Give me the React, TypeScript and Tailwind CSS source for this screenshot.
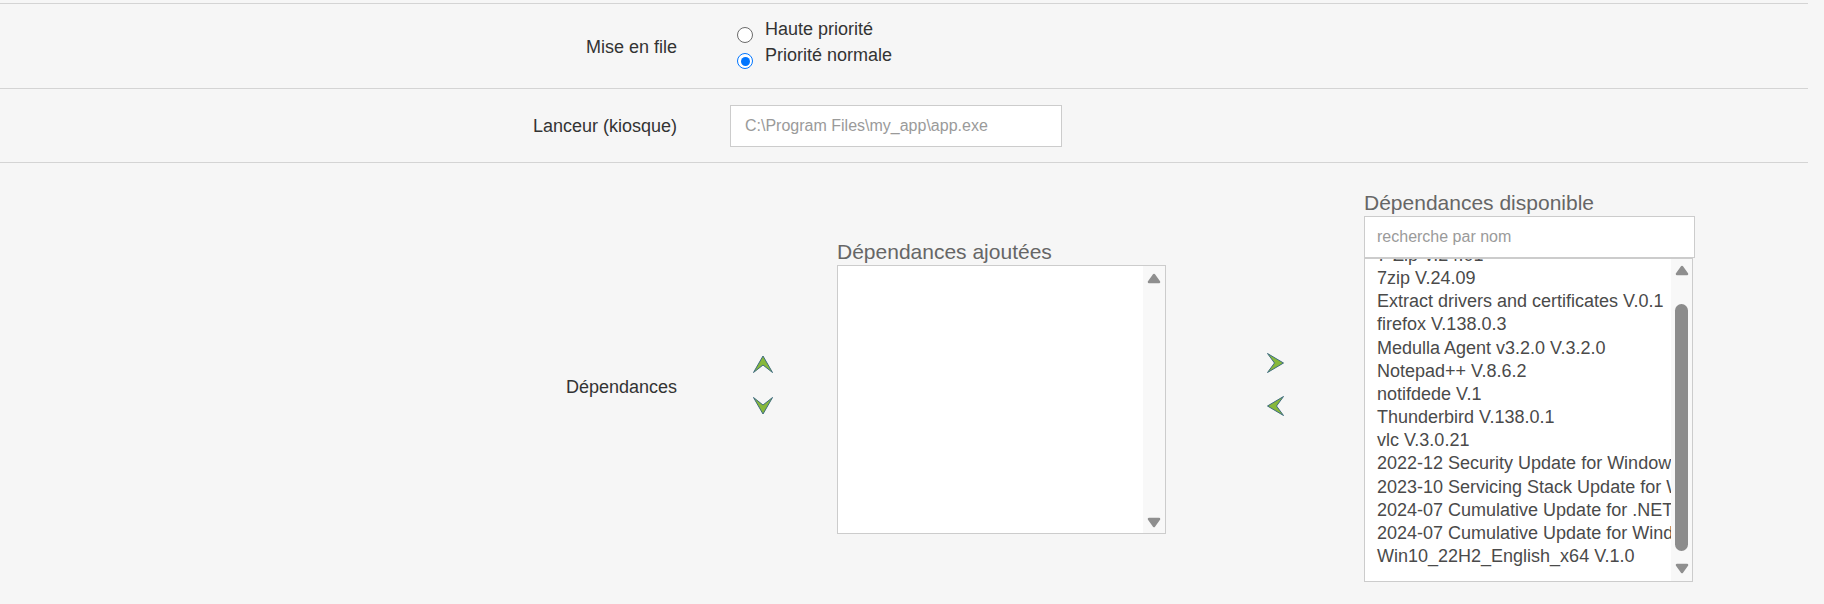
import React from "react";

const items = [
  "7-Zip V.24.01",
  "7zip V.24.09",
  "Extract drivers and certificates V.0.1",
  "firefox V.138.0.3",
  "Medulla Agent v3.2.0 V.3.2.0",
  "Notepad++ V.8.6.2",
  "notifdede V.1",
  "Thunderbird V.138.0.1",
  "vlc V.3.0.21",
  "2022-12 Security Update for Windows 10 Version 22H2",
  "2023-10 Servicing Stack Update for Windows 10 Version 22H2",
  "2024-07 Cumulative Update for .NET Framework 3.5",
  "2024-07 Cumulative Update for Windows 10 Version 22H2",
  "Win10_22H2_English_x64 V.1.0",
];

function Tri({ down }: { down?: boolean }) {
  return (
    <svg width="14" height="11" viewBox="0 0 14 11" className="block">
      <polygon
        points={down ? "2,2 12,2 7,9" : "7,2 12,9 2,9"}
        fill="#8f8f8f"
        stroke="#8f8f8f"
        strokeWidth="2.5"
        strokeLinejoin="round"
      />
    </svg>
  );
}

function Chevron({ dir }: { dir: "up" | "down" | "left" | "right" }) {
  const vertical = dir === "up" || dir === "down";
  const pts =
    dir === "up"
      ? "10,1 19.5,17.5 10,10 0.5,17.5"
      : dir === "down"
      ? "10,17 19.5,0.5 10,8 0.5,0.5"
      : dir === "right"
      ? "0.5,0.5 16.5,10 0.5,19.5 7.5,10"
      : "16.5,0.5 0.5,10 16.5,19.5 9.5,10";
  return (
    <svg
      width={vertical ? 20 : 17}
      height={vertical ? 18 : 20}
      viewBox={vertical ? "0 0 20 18" : "0 0 17 20"}
      className="block"
    >
      <polygon points={pts} fill="#87b83a" stroke="#3e6c7e" strokeWidth="1" strokeLinejoin="miter" />
    </svg>
  );
}

function Radio({ checked }: { checked?: boolean }) {
  return checked ? (
    <span className="mt-[11px] w-[16px] h-[16px] shrink-0 rounded-full border-[1.5px] border-[#0075ff] bg-white flex items-center justify-center">
      <span className="w-[9px] h-[9px] rounded-full bg-[#0075ff]" />
    </span>
  ) : (
    <span className="mt-[11px] w-[16px] h-[16px] shrink-0 rounded-full border-[1.5px] border-[#6b6b6b] bg-white" />
  );
}

export default function App() {
  return (
    <div className="w-full h-[604px] overflow-hidden bg-[#f6f6f6] pt-[3px] pr-[16px] font-['Liberation_Sans',Arial,sans-serif] text-[18px] text-[#333]">
      {/* Row 1 */}
      <div className="flex items-start h-[85px] border-t border-[#d4d4d4]">
        <div className="w-[677px] shrink-0 text-right leading-[26px] mt-[30px]">Mise en file</div>
        <div className="ml-[60px] mt-[12px] flex flex-col">
          <label className="flex items-start h-[26px] leading-[26px]">
            <Radio />
            <span className="ml-[12px]">Haute priorité</span>
          </label>
          <label className="flex items-start h-[26px] leading-[26px]">
            <Radio checked />
            <span className="ml-[12px]">Priorité normale</span>
          </label>
        </div>
      </div>

      {/* Row 2 */}
      <div className="flex items-center h-[74px] border-t border-[#d4d4d4]">
        <div className="w-[677px] shrink-0 text-right leading-[26px]">Lanceur (kiosque)</div>
        <input
          type="text"
          placeholder="C:\Program Files\my_app\app.exe"
          className="ml-[53px] w-[332px] h-[42px] bg-white border border-[#cccccc] pl-[14px] text-[16px] text-[#555] placeholder:text-[#9a9a9a] outline-none"
        />
      </div>

      {/* Row 3 */}
      <div className="flex items-center border-t border-[#d4d4d4] pt-[28px] pb-[28px]">
        <div className="w-[677px] shrink-0 text-right leading-[26px]">Dépendances</div>

        <div className="ml-[76px] w-[20px] flex flex-col gap-[24px] mb-[3px]">
          <Chevron dir="up" />
          <Chevron dir="down" />
        </div>

        <div className="ml-[64px] w-[329px] flex flex-col">
          <div className="text-[21px] leading-[24px] text-[#666] mb-[1px] whitespace-nowrap">Dépendances ajoutées</div>
          <div className="h-[269px] bg-white border border-[#cccccc] flex">
            <div className="flex-1" />
            <div className="w-[22px] bg-[#f8f8f8] flex flex-col items-center justify-between pt-[7px] pb-[5px]">
              <Tri />
              <Tri down />
            </div>
          </div>
        </div>

        <div className="ml-[101px] w-[17px] flex flex-col gap-[23px] mb-[4px]">
          <Chevron dir="right" />
          <Chevron dir="left" />
        </div>

        <div className="ml-[80px] w-[331px] flex flex-col">
          <div className="text-[21px] leading-[24px] text-[#666] mb-[1px] whitespace-nowrap">Dépendances disponible</div>
          <input
            type="text"
            placeholder="recherche par nom"
            className="w-[331px] h-[42px] bg-white border border-[#cccccc] pl-[12px] text-[16px] text-[#555] placeholder:text-[#9a9a9a] outline-none"
          />
          <div className="w-[329px] h-[324px] bg-white border border-[#cccccc] flex overflow-hidden">
            <div className="flex-1 overflow-hidden pl-[12px]">
              <div className="-mt-[15px] text-[#4a4a4a] leading-[23.15px]">
                {items.map((it) => (
                  <div key={it} className="whitespace-nowrap">
                    {it}
                  </div>
                ))}
              </div>
            </div>
            <div className="w-[21px] shrink-0 bg-[#f8f8f8] flex flex-col items-center pt-[6px] pb-[7px]">
              <Tri />
              <div className="mt-[28px] w-[13px] h-[247px] rounded-full bg-[#8c8c8c]" />
              <div className="mt-auto">
                <Tri down />
              </div>
            </div>
          </div>
        </div>
      </div>
    </div>
  );
}
